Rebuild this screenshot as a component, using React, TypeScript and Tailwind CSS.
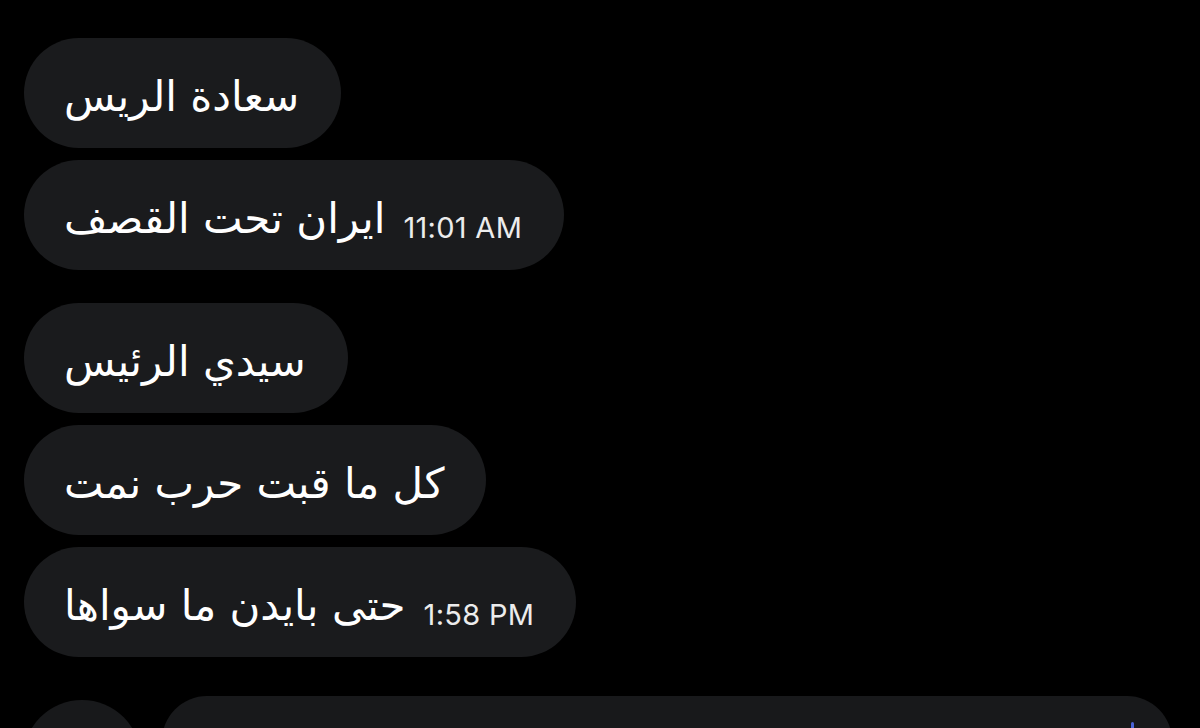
import React from 'react';

type Msg = { text: string; time?: string };

const groups: Msg[][] = [
  [{ text: 'سعادة الريس' }, { text: 'ايران تحت القصف', time: '11:01 AM' }],
  [
    { text: 'سيدي الرئيس' },
    { text: 'كل ما قبت حرب نمت' },
    { text: 'حتى بايدن ما سواها', time: '1:58 PM' },
  ],
];

function Bubble({ msg }: { msg: Msg }) {
  return (
    <div className="self-start h-[110px] rounded-full bg-[#1a1b1d] pl-[40px] pr-[42px] flex items-center gap-[18px]">
      <span
        dir="rtl"
        className="text-white text-[42px] leading-none pt-[8px]"
        style={{ fontFamily: '"DejaVu Sans", sans-serif' }}
      >
        {msg.text}
      </span>
      {msg.time && (
        <span className="text-[#ececec] text-[29px] leading-none tracking-[0.01em] mt-[24px] font-['Inter',sans-serif]">
          {msg.time}
        </span>
      )}
    </div>
  );
}

export default function App() {
  return (
    <div className="w-[1200px] h-[728px] bg-black overflow-hidden px-[24px] pt-[38px] flex flex-col">
      <div className="flex flex-col gap-[33px]">
        {groups.map((g, i) => (
          <div key={i} className="flex flex-col gap-[12px]">
            {g.map((m, j) => (
              <Bubble key={j} msg={m} />
            ))}
          </div>
        ))}
      </div>

      {/* composer row, cut off by the bottom edge */}
      <div className="mt-[39px] flex items-start">
        <div className="ml-[-1px] mt-[4px] w-[118px] h-[118px] shrink-0 rounded-full bg-[#18191b]" />
        <div className="ml-[21px] w-[1010px] h-[120px] shrink-0 rounded-[45px] bg-[#18191b] flex justify-end pr-[38px] pt-[26px]">
          <span className="w-[3px] h-[10px] bg-[#4a63d8] rounded-full" />
        </div>
      </div>
    </div>
  );
}
